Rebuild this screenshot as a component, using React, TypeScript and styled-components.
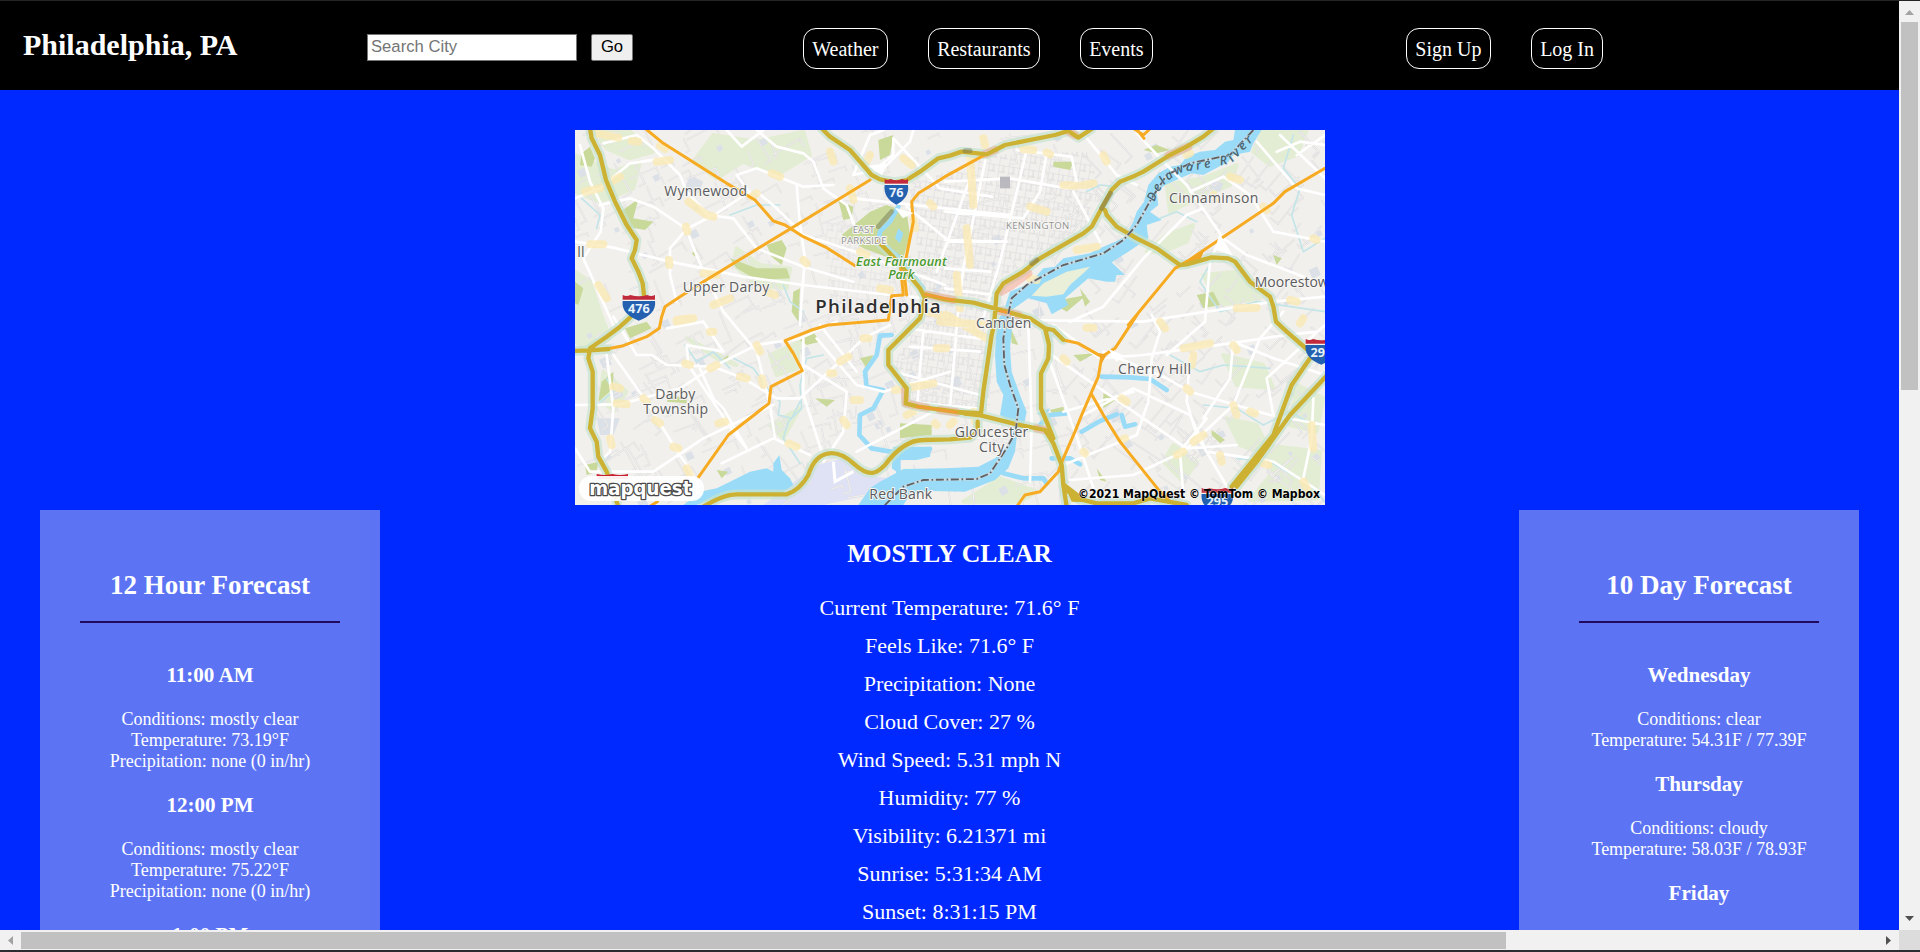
import React from "react";
import styled, { createGlobalStyle } from "styled-components";

const GlobalStyle = createGlobalStyle`
  * { box-sizing: border-box; }
  html, body { margin: 0; padding: 0; overflow: hidden; }
  body { font-family: "Liberation Serif", "Times New Roman", serif; color: #fff; background: #0029ff; }
`;

const Window = styled.div`
  display: grid;
  grid-template-columns: 1899px 21px;
  grid-template-rows: 929px 20px 2px;
  width: 1920px;
  height: 952px;
  border-top: 1px solid #242424;
  overflow: hidden;
`;

const Page = styled.div`
  overflow: hidden;
  background: #0029ff;
`;

const Header = styled.header`
  display: flex;
  align-items: flex-start;
  height: 89px;
  background: #000;
`;

const City = styled.h1`
  width: 344px;
  margin: 27px 0 0 23px;
  font-size: 30px;
  line-height: 34px;
`;

const SearchForm = styled.form`
  display: flex;
  gap: 14px;
  width: 436px;
  margin-top: 33px;
`;

const SearchInput = styled.input`
  width: 210px;
  height: 27px;
  padding: 0 3px 2px;
  border: 1px solid #767676;
  border-radius: 0;
  background: #fff;
  font: 16.67px "Liberation Sans", Arial, sans-serif;
  &::placeholder { color: #757575; }
`;

const GoButton = styled.button`
  width: 42px;
  height: 27px;
  padding: 0 0 2px;
  border: 1px solid #767676;
  border-radius: 2px;
  background: #efefef;
  color: #000;
  font: 16.67px "Liberation Sans", Arial, sans-serif;
`;

const Nav = styled.nav<{ $width: number }>`
  display: flex;
  gap: 40px;
  width: ${(p) => p.$width}px;
  margin-top: 27px;
`;

const NavLink = styled.a`
  height: 41px;
  padding: 9px 8.35px 7px;
  border: 1px solid #fff;
  border-radius: 13px;
  font-size: 20px;
  line-height: 23px;
  white-space: nowrap;
`;

const Main = styled.main`
  display: grid;
  grid-template-columns: 340px 750px 340px;
  justify-content: space-between;
  padding: 40px 40px 0;
`;

const Panel = styled.section<{ $left: number }>`
  height: 600px;
  margin-top: 380px;
  padding: 60px 40px 0 ${(p) => p.$left}px;
  background: #5c74f4;
  text-align: center;
`;

const PanelTitle = styled.h2`
  margin: 0 0 20px;
  font-size: 27px;
  line-height: 31px;
`;

const Rule = styled.hr`
  height: 2px;
  margin: 0 0 40px;
  border: 0;
  background: #210a5c;
`;

const Forecast = styled.article`
  margin-bottom: 21px;
  font-size: 18px;
  line-height: 21px;
`;

const ForecastTitle = styled.h3`
  margin: 0 0 22px;
  font-size: 21.06px;
  line-height: 24px;
`;

const Current = styled.section`
  text-align: center;
  font-size: 22px;
`;

const MapFrame = styled.svg`
  display: block;
  width: 750px;
  height: 375px;
`;

const CurrentTitle = styled.h3`
  margin: 34px 0 26px;
  font-size: 25.74px;
  line-height: 30px;
`;

const Reading = styled.p`
  margin: 0 0 13px;
  line-height: 25px;
`;

const VTrack = styled.div`
  display: flex;
  flex-direction: column;
  align-items: center;
  justify-content: space-between;
  padding: 9px 0 9px;
  background: #f1f1f1;
`;

const VThumb = styled.div`
  width: 17px;
  height: 368px;
  margin: 7px 0 auto;
  background: #c1c1c1;
`;

const HTrack = styled.div`
  display: flex;
  align-items: center;
  padding: 0 8px 0 8px;
  background: #f1f1f1;
`;

const HThumb = styled.div`
  width: 1485px;
  height: 17px;
  margin: 1px auto 0 8px;
  background: #c1c1c1;
`;

const Corner = styled.div`
  background: #dcdcdc;
`;

const BottomEdge = styled.div`
  grid-column: 1 / 3;
  background: #2b2c2f;
`;

const Arrow = styled.svg`
  display: block;
  flex: none;
`;

const hours = [
  { time: "11:00 AM", conditions: "mostly clear", temp: "73.19" },
  { time: "12:00 PM", conditions: "mostly clear", temp: "75.22" },
  { time: "1:00 PM" },
];

const days = [
  { day: "Wednesday", conditions: "clear", temp: "54.31F / 77.39F" },
  { day: "Thursday", conditions: "cloudy", temp: "58.03F / 78.93F" },
  { day: "Friday" },
];

const readings = [
  "Current Temperature: 71.6° F",
  "Feels Like: 71.6° F",
  "Precipitation: None",
  "Cloud Cover: 27 %",
  "Wind Speed: 5.31 mph N",
  "Humidity: 77 %",
  "Visibility: 6.21371 mi",
  "Sunrise: 5:31:34 AM",
  "Sunset: 8:31:15 PM",
];

/* ---- map data, in map units (three per pixel) ---- */

const meadows = [
  "M70 15L180 20 250 80 180 100 110 70Z", "M370 110L430 30 560 50 700 20 720 90 620 150 520 110 440 160Z",
  "M15 90L130 140 210 110 190 190 90 230 15 200Z", "M15 440L60 470 90 560 120 640 60 680 15 650Z",
  "M500 370L570 420 660 430 650 490 560 480 490 420Z", "M350 640L430 680 500 720 440 700Z",
  "M600 690L690 650 680 730 620 750Z", "M100 740L170 800 130 860 90 820Z",
  "M1790 180L1900 160 2000 120 1980 180 1860 230 1800 260Z", "M2080 15L2210 15 2180 90 2100 120 2050 80Z",
  "M1730 380L1790 330 1870 300 1850 350 1780 380Z", "M1900 450L2000 440 2070 520 1950 540Z",
  "M1970 880L2060 900 2110 1000 2010 960Z", "M2080 960L2250 980 2240 1120 2040 1125 2110 1040Z",
  "M1960 690L2080 720 2110 790 2000 780Z", "M1290 1060L1400 1100 1350 1130 1180 1130Z",
  "M1370 510L1440 455 1560 430 1480 490Z", "M2180 780L2260 820 2240 920 2160 900Z",
  "M1810 960L1880 1010 1840 1070 1780 1010Z", "M600 900L690 850 640 940Z",
];

const parks = [
  "M35 85L60 65 75 100 65 125 30 120Z", "M145 265L205 222 190 280 250 290 225 315 170 305Z",
  "M590 360L635 345 650 370 635 420 605 395Z", "M480 400L560 430 650 430 660 460 560 465 500 430Z",
  "M805 225L850 245 845 280 820 285Z", "M815 330L900 260 950 240 1010 260 1020 330 1000 400 960 400 880 370Z",
  "M925 45L970 30 960 90 930 105Z", "M15 470L40 490 25 540 15 535Z", "M670 500L690 490 685 590 665 560Z",
  "M165 610L230 590 245 610 180 640Z", "M95 770L130 740 130 790 85 830Z", "M870 700L910 690 890 730Z",
  "M990 895L1085 900 1085 930 990 940Z", "M45 1020L85 1010 80 1040 50 1050Z", "M300 810L350 820 350 835 290 830Z",
  "M1450 110L1510 110 1500 135 1450 125Z", "M1720 75L1760 60 1800 75 1760 85Z", "M1440 530L1550 510 1490 560Z",
  "M1320 605L1345 660 1325 655Z", "M1510 690L1575 685 1530 710Z", "M1600 805L1645 820 1600 850Z",
  "M1880 510L1930 500 1950 540 1900 550Z", "M1440 855L1480 845 1485 870 1450 870Z",
  "M1925 915L1965 945 1950 955 1925 930Z", "M1580 1030L1610 1070 1590 1065Z", "M2110 390L2135 400 2120 420Z",
  "M680 640L730 620 750 650 710 660Z", "M365 385L380 375 375 395Z", "M440 1035L475 1040 455 1060Z",
  "M735 820L795 825 770 845Z", "M475 690L455 705 475 700Z", "M1530 490L1560 530 1545 545Z",
];

const river =
  "M1995 15L1990 45 1965 50 1935 75 1890 80 1850 95 1830 120 1800 125 1765 145 1735 180 1722 230 1700 260 1690 290 1665 335 1640 348 1600 365 1560 385 1480 400 1455 425 1420 430 1380 475 1320 500 1300 560 1280 590 1275 690 1280 770 1300 810 1290 870 1335 905 1315 960 1275 1000 1225 1025 1125 1030 1000 1032 930 1070 900 1090 865 1140 1000 1140 1020 1110 1080 1098 1185 1100 1275 1065 1315 1030 1335 980 1340 940 1362 900 1370 860 1350 810 1325 740 1320 670 1330 570 1325 555 1375 520 1430 535 1445 568 1495 540 1485 520 1555 460 1610 470 1635 470 1640 450 1665 450 1625 412 1675 380 1735 340 1730 300 1775 285 1740 260 1765 240 1760 200 1785 180 1865 145 1900 150 1975 110 1990 90 2040 80 2050 55 2075 15Z";

const streams = [
  "M985 245L960 290 930 320 925 345 990 400 1060 490",
  "M965 630L930 632 920 690 885 740 890 785 940 795 910 850 870 870 868 930 905 970 960 980 1080 972",
  "M985 970L985 1045", "M1595 755L1680 757 1740 762 1790 795", "M1535 920L1590 888 1640 868",
  "M1655 870L1665 905 1695 898", "M1410 900L1440 870 1490 865", "M1445 1000L1500 1000 1530 1018",
  "M1300 1045L1360 1060 1420 1060 1430 1075",
];

const creeks = [
  "M690 1015L640 940 655 890 695 850 690 780 710 700 760 690", "M595 800L630 830 625 870 665 880 690 830",
  "M490 700L550 730 600 800", "M35 220L90 270 80 310", "M480 270L560 240 630 240", "M345 660L380 710 430 680 480 730",
  "M2170 30L2140 130 2190 190 2165 270 2200 380 2265 340", "M1930 400L1890 470 1950 560 2060 530 2265 560",
  "M1900 840L2000 850 2080 900 2160 860 2230 900", "M1800 690L1890 740 1960 720 2100 730", "M1770 280L1820 260 1880 290",
  "M1550 200L1590 180 1640 185", "M640 480L660 530 700 560", "M110 760L130 800 80 840", "M2000 1000L2100 1010 2220 1080 2265 1130",
];

const avenues = [
  "M15 350L130 368 300 410 520 455 700 480 960 510", "M30 60L60 170 100 250 92 320 40 400 130 600",
  "M100 55L200 30 250 70 330 150 350 200 415 270 490 280 560 370 700 425 850 470",
  "M90 240L180 220 250 245 350 312 440 265 540 200", "M350 312L300 370 300 450 320 530",
  "M280 100L180 115 90 190 15 220", "M470 15L515 65 580 15", "M540 205L500 150 560 130 700 185 790 180",
  "M560 15L620 65 700 85 730 110 760 190 830 240 860 320", "M680 180L690 300 705 400 695 520 690 600",
  "M345 305L400 440 460 560 560 680 600 840 615 940", "M560 200L620 250 700 330 870 385 1125 480",
  "M130 575L200 690 245 690 290 720 430 725 520 760 620 820 690 820", "M15 840L150 838 330 790 430 725 560 660 690 640 800 590",
  "M290 610L400 590 460 680 350 660 355 720 490 920 530 970", "M110 690L130 850 120 980 90 1010",
  "M15 970L60 1040 250 1040 400 940 610 840", "M130 690L230 830 310 960 370 1050",
  "M385 720L430 820 460 850 530 970", "M455 1015L610 940 720 990", "M700 640L700 810 755 980",
  "M700 720L830 800 820 920 760 1010", "M740 640L860 780 940 800 1140 740", "M690 820L820 700 880 640 960 600",
  "M750 600L860 740", "M940 15L900 30 850 150 940 130 1020 50 1030 15", "M920 130L970 90 970 40 1110 190 1265 215",
  "M850 220L1125 250 1320 270", "M1125 170L1320 160 1490 190 1520 170 1505 95 1340 75",
  "M1370 75L1290 410", "M1250 85L1180 430 1160 600", "M1190 80L1200 160 1100 440", "M1290 410L1240 580",
  "M1125 260L1360 280 1410 200 1430 85", "M1125 345L1310 350", "M1125 430L1260 440", "M1010 245L1140 350 1290 350",
  "M1125 490L1270 510", "M1020 515L1265 540", "M1015 610L1260 645", "M1020 665L1230 680",
  "M1060 615L1040 860", "M1160 610L1140 850", "M990 745L1230 810", "M1000 830L1220 850", "M860 980L1090 860",
  "M1510 200L1590 350", "M1530 15L1600 100 1640 150 1700 180", "M1700 25L1790 120 1850 180 1960 340 2030 390 2265 480",
  "M1860 200L1960 155 2040 210 2110 320 2265 350", "M2060 50L2180 190 2265 210", "M2180 90L2265 30",
  "M2120 80L2190 50 2265 60", "M1950 340L1920 410 1905 590 1790 690", "M1350 585L1720 590 1910 560 2110 530 2265 515",
  "M1500 590L1600 545 1720 400 1850 270 1900 250", "M1450 600L1590 700 1720 690 1980 655 2150 630 2240 620",
  "M1745 570L1770 620 1745 700 1735 830 1700 930 1480 1020", "M1430 680L1850 970 2000 960",
  "M1435 700L1520 935 1580 1120", "M1600 680L1790 760 1860 800 2100 870 2265 900", "M1860 690L1850 830 1880 930 1980 1100",
  "M1990 650L1980 760 1900 880", "M1540 870L1690 790 1860 870 1910 980 2110 1010 2265 1110",
  "M1500 1065L1690 1050 1840 980 1990 840 2070 640 2140 560", "M1375 600L1385 900 1380 1070", "M1480 860L1690 800",
  "M2110 870L2090 760 2265 600", "M2230 820L2225 940 2200 1060", "M1840 1110L1830 980 1910 880",
  "M1990 650L2110 700 2265 750", "M2130 30L2265 160", "M1125 950L1290 930",
];

const blobs = [
  "M75 25L145 38", "M185 48L205 50", "M260 110L300 105", "M45 200L90 190 150 155", "M60 358L100 358", "M270 62L285 72",
  "M355 230L410 270 430 275", "M348 305L352 320", "M605 145L630 155", "M780 80L790 110", "M890 110L900 90", "M1000 100L1025 120",
  "M840 190L850 225", "M1080 235L1090 245", "M1030 285L1035 310", "M545 215L560 205", "M297 405L298 420", "M85 480L110 520",
  "M400 445L440 450", "M430 540L480 520", "M320 590L370 580", "M700 405L710 415", "M590 500L615 510", "M870 380L890 390",
  "M930 490L960 495", "M320 585L360 580", "M420 620L430 620", "M560 660L570 680", "M420 730L440 720", "M345 715L360 720",
  "M510 755L530 760", "M575 760L580 780", "M130 785L150 790", "M140 835L170 838", "M220 820L230 830", "M255 885L270 895",
  "M445 895L465 890", "M310 965L325 970", "M120 940L125 960", "M350 1030L360 1050", "M810 710L835 695", "M780 745L790 745",
  "M880 640L895 640", "M850 825L870 825", "M820 885L830 900", "M655 955L680 965", "M975 795L1090 775", "M1100 670L1130 670",
  "M1110 590L1260 600", "M1130 570L1250 640", "M1070 560L1130 575", "M1160 450L1170 550", "M1200 90L1210 240", "M1190 310L1200 420",
  "M1240 40L1245 60", "M1360 72L1390 75", "M1430 82L1440 88", "M1480 180L1520 182", "M1380 245L1430 260", "M1600 90L1610 110",
  "M1380 460L1400 465", "M1520 375L1580 365", "M1540 180L1570 175", "M1850 90L1860 85", "M1980 155L2010 165", "M1930 210L1940 220",
  "M2080 245L2090 255", "M2230 340L2240 345", "M2000 550L2060 548", "M2160 525L2180 530", "M2190 595L2200 580", "M1550 608L1570 608",
  "M1770 590L1785 610", "M1840 670L1920 655", "M1870 690L1865 720", "M1990 660L2000 675", "M1480 700L1490 710", "M1655 820L1670 830",
  "M1850 790L1860 800", "M1990 840L2000 870", "M1870 950L1900 930", "M1820 990L1840 980", "M1950 990L1955 1010", "M2225 900L2230 970",
  "M2200 1070L2210 1090", "M1540 980L1545 985", "M1655 945L1665 940", "M1210 860L1215 890", "M1010 870L1030 860", "M1095 895L1100 900",
  "M2040 860L2055 865", "M1150 890L1140 900", "M2080 1015L2095 1020",
];

const orangeRoads = [
  "M225 10L280 55 470 175 555 225 610 288 645 300 700 335 770 368 855 422",
  "M110 672L160 662 230 635 268 610 275 575 285 545 330 515 400 470 660 312 900 165",
  "M1240 92L1125 155 1045 205 1025 230 1030 290 1008 400", "M992 430L1000 510 965 512 955 585 775 600 725 615 645 647 670 685 697 737 603 785 597 835 475 930 385 1057",
  "M1002 440L1010 510", "M262 1130L230 1150", "M1690 10L1720 30 1740 12", "M1700 12L1722 40",
  "M2265 130L2145 200 2110 235 1850 410 1815 430 1675 600", "M1702 568L1635 670 1595 695 1585 755 1563 805 1535 870 1515 920 1480 1000 1465 1040 1410 1100 1365 1110 1340 1145",
  "M1563 805L1600 870 1650 950 1770 1100 1800 1130", "M1480 645L1525 655 1595 695",
];

const highways = [
  "M60 10L65 40 90 90 108 165 135 230 170 300 200 345 195 375 185 400 205 440 218 475 222 510",
  "M180 578L150 605 110 635 60 670 55 700 68 740 68 850 60 910 80 950 85 995 110 1040 145 1145",
  "M10 678L60 676 115 672",
  "M755 10L780 35 840 75 905 150 930 163 975 172 1010 165 1050 140 1105 100 1140 92 1175 80 1250 88 1305 60 1455 30 1495 18 1525 38 1565 12",
  "M1928 12L1900 35 1850 65 1800 90 1720 140 1695 152 1650 170 1625 195 1595 250 1565 305 1540 325 1410 400 1360 440 1300 475 1280 505 1272 600 1265 630 1240 800 1233 865",
  "M1605 255L1610 270 1640 305 1700 340 1760 370 1830 420 1850 418 1925 397 1975 400 1995 410 2040 470 2100 515 2110 545 2118 590 2150 620 2210 672",
  "M1125 523L1210 533 1310 560 1380 580 1425 610 1450 615 1480 645",
  "M925 350L960 385 1000 430 1050 490 1065 520 1050 580 955 675 955 720 1010 790 1007 835 1045 845 1140 858 1235 872 1340 898 1425 915 1450 955 1475 1020 1480 1080 1490 1145",
  "M1065 508L1125 523", "M1425 610L1437 660 1435 700 1413 745 1413 850 1430 890 1450 940",
  "M400 1145Q460 1108 500 1108L650 1108Q690 1095 715 1050C740 970 800 970 850 1015S920 1045 945 1020Q1000 945 1060 945L1140 943 1200 938 1223 920 1223 890",
  "M2220 700L2165 780 2110 930 1985 1085", "M2270 752L2160 870 2060 1010 2000 1085",
  "M1490 1095L1520 1120 1580 1135 1690 1135 1740 1120 1850 1140",
];

const traffic = ["M1065 508L1150 525", "M1290 558L1345 570", "M1005 795L1007 835 1070 848", "M1110 855L1160 862", "M1795 92L1855 65", "M1295 500L1330 478 1375 445", "M1400 910L1430 917", "M1245 87L1275 75", "M1490 17L1515 30"];
const hotLanes = ["M1065 508L1150 525", "M1040 844L1160 862", "M1290 558L1320 564"];
const congestion = ["M965 260L925 305", "M1595 250L1622 205", "M1385 415L1400 405", "M1185 77L1200 77"];

const stateLine =
  "M2050 15L1980 90 1860 115 1790 150 1745 220 1700 300 1660 345 1600 385 1480 420 1370 480 1325 520 1308 600 1300 640 1303 720 1320 780 1345 850 1337 920 1310 970 1260 1045 1220 1062 1060 1065 1000 1085 940 1145";

/* Residential side streets: short segments with a fixed pseudo-random layout. */
const sideStreets = (() => {
  let seed = 17;
  const next = () => {
    seed = (seed * 16807) % 2147483647;
    return seed / 2147483647;
  };
  let d = "";
  for (let i = 0; i < 620; i++) {
    const x = 15 + next() * 2250;
    const y = 15 + next() * 1125;
    const base = x > 1480 ? 0.75 : x < 700 ? -0.5 : -0.25;
    const angle = base + (next() > 0.5 ? Math.PI / 2 : 0) + (next() - 0.5) * 0.35;
    const length = 30 + next() * 75;
    const dx = Math.cos(angle) * length;
    const dy = Math.sin(angle) * length;
    d += `M${x.toFixed(0)} ${y.toFixed(0)}l${dx.toFixed(0)} ${dy.toFixed(0)}l${(-dy * 0.3).toFixed(0)} ${(dx * 0.3).toFixed(0)}`;
  }
  return d;
})();

const blocks = (() => {
  let seed = 91;
  const next = () => {
    seed = (seed * 16807) % 2147483647;
    return seed / 2147483647;
  };
  let d = "";
  for (let i = 0; i < 90; i++) {
    const s = 10 + next() * 16;
    d += `M${(15 + next() * 2250).toFixed(0)} ${(15 + next() * 1125).toFixed(0)}l${s.toFixed(0)} ${(-s / 2).toFixed(0)} ${(s / 2).toFixed(0)} ${s.toFixed(0)} ${(-s).toFixed(0)} ${(s / 2).toFixed(0)}z`;
  }
  return d;
})();

type Label = { text: string; x: number; y: number; w: number; size?: number; weight?: number; color?: string; italic?: boolean };
const labels: Label[] = [
  { text: "Wynnewood", x: 283, y: 213, w: 248 },
  { text: "Upper Darby", x: 338, y: 500, w: 260 },
  { text: "ll", x: 22, y: 397, w: 22 },
  { text: "Darby", x: 256, y: 822, w: 120 },
  { text: "Township", x: 220, y: 868, w: 194 },
  { text: "Red Bank", x: 898, y: 1122, w: 188 },
  { text: "Camden", x: 1218, y: 608, w: 166 },
  { text: "Gloucester", x: 1154, y: 935, w: 221 },
  { text: "City", x: 1227, y: 982, w: 76 },
  { text: "Cherry Hill", x: 1644, y: 747, w: 219 },
  { text: "Cinnaminson", x: 1797, y: 234, w: 268 },
  { text: "Moorestown", x: 2054, y: 485, w: 248 },
  { text: "EAST", x: 848, y: 323, w: 66, size: 29, color: "#929292" },
  { text: "PARKSIDE", x: 813, y: 356, w: 137, size: 29, color: "#929292" },
  { text: "KENSINGTON", x: 1308, y: 311, w: 190, size: 29, color: "#929292" },
  { text: "East Fairmount", x: 858, y: 424, w: 272, size: 38, weight: 600, color: "#4a9a2f", italic: true },
  { text: "Park", x: 955, y: 461, w: 78, size: 38, weight: 600, color: "#4a9a2f", italic: true },
  { text: "Philadelphia", x: 736, y: 563, w: 376, size: 56, weight: 600, color: "#2e2e2e" },
];

const Lines = ({ d, stroke, width, opacity = 1 }: { d: string[]; stroke: string; width: number; opacity?: number }) => (
  <path d={d.join("")} fill="none" stroke={stroke} strokeWidth={width} opacity={opacity} strokeLinejoin="round" strokeLinecap="round" />
);

const Shield = ({ x, y, w, route }: { x: number; y: number; w: number; route: string }) => (
  <g transform={`translate(${x} ${y})`}>
    <path d={`M0 0Q${w * 0.12} 6 ${w * 0.24} 0Q${w * 0.5} 8 ${w * 0.76} 0Q${w * 0.88} 6 ${w} 0L${w} 15H0Z`} fill="#c02a3b" />
    <path d={`M0 17H${w}C${w + 4} 46 ${w * 0.84} 64 ${w / 2} 77C${w * 0.16} 64 -4 46 0 17Z`} fill="#2460b0" />
    <path d={`M-1 16H${w + 1}`} stroke="#f4f4f4" strokeWidth="4" />
    <text x={w / 2} y="54" fontSize="38" fontWeight="700" fill="#e8f2fa" textAnchor="middle">{route}</text>
  </g>
);

const CityMap = () => (
  <MapFrame viewBox="15 15 2250 1125" fontFamily='"Open Sans", "Noto Sans", sans-serif' aria-label="Map of Philadelphia">
    <defs>
      <pattern id="grid" width="30" height="42" patternUnits="userSpaceOnUse" patternTransform="rotate(9)">
        <path d="M0 0H30M0 21H22M0 0V42M15 0V21" stroke="#dadadb" strokeWidth="3" fill="none" />
      </pattern>
      <path id="delaware" d="M1745 228Q1756 185 1795 155T1860 128L1980 105 2055 25" />
    </defs>
    <rect x="15" y="15" width="2250" height="1125" fill="#f2f0ed" />
    <path d={meadows.join("")} fill="#e1edd0" stroke="#e1edd0" strokeWidth="12" strokeLinejoin="round" opacity=".85" />
    <path d={blocks} fill="#dce1e8" />
    <path d="M360 150L400 170 385 205 340 200Z M80 880L150 880 130 930 90 930Z M1925 165L1960 175 1950 200 1920 190Z" fill="#dce1e8" />
    <path d="M740 1020L820 1000 880 1050 960 1060 900 1110 760 1140 580 1140Z" fill="#dfe2f4" />
    <path d="M1025 180L1260 90 1550 80 1590 190 1540 320 1270 470 1260 870 1040 840 965 720 1060 580Z" fill="url(#grid)" />
    <path d="M760 290L850 300 1000 450 950 560 780 550Z" fill="url(#grid)" opacity=".7" />
    <path d={sideStreets} fill="none" stroke="#dadadb" strokeWidth="5" />
    <path d={sideStreets} fill="none" stroke="#f5f4f2" strokeWidth="2.5" />
    <path d={parks.join("")} fill="#c9d99a" />
    <Lines d={creeks} stroke="#c3e5e8" width={5} />
    <path d={river} fill="#9adcf7" />
    <path d="M1385 512L1420 475 1490 440 1560 425 1545 440 1500 480 1480 508 1430 515Z" fill="#e9efd9" />
    <path d="M400 1098L440 1090 480 1070 540 1040 590 1030 610 1040 610 1015 628 990 635 1035 660 1060 670 1080 620 1115 490 1100 380 1140 340 1140Z" fill="#9adcf7" />
    <path d="M970 965L1085 965 1080 995 1040 1005 990 1005 980 1040 965 1030Z M985 310L1000 325 990 355 975 340Z M1400 865L1440 850 1425 880Z" fill="#9adcf7" />
    <Lines d={streams} stroke="#9adcf7" width={14} />
    <Lines d={avenues} stroke="#fff" width={8} />
    <path d="M790 1010L795 1070 850 1040" fill="none" stroke="#fff" strokeWidth="9" />
    <Lines d={blobs} stroke="#fbe9b4" width={24} opacity={0.78} />
    <Lines d={highways} stroke="#c5e2ce" width={29} opacity={0.7} />
    <Lines d={traffic} stroke="#fa9c88" width={24} opacity={0.45} />
    <Lines d={orangeRoads} stroke="#f6ab22" width={9} />
    <path d="M1835 420L1905 372 1888 410Z M1588 684L1610 690 1595 715Z" fill="#f0a524" />
    <path d="M1480 1070L1505 1130 1560 1132Z M1165 855L1230 858 1235 875 1185 873Z" fill="#ccb133" />
    <Lines d={highways} stroke="#ccb133" width={13} />
    <Lines d={hotLanes} stroke="#f29a38" width={7} />
    <Lines d={congestion} stroke="#6f7051" width={15} opacity={0.45} />
    <path d="M1290 155H1320V190H1290Z" fill="#b9b9bf" />
    <path d="M905 125L945 120 935 145Z M985 255L1020 265 1000 275Z M1950 335L1980 385 1940 370Z M1625 680L1660 695 1640 705Z" fill="#fff" stroke="#fff" strokeWidth="8" />
    <path d={stateLine} fill="none" stroke="#d8d8d8" strokeWidth="8" opacity=".7" />
    <path d={stateLine} fill="none" stroke="#606164" strokeWidth="5.5" strokeDasharray="24 8 5 8" />
    <text fontSize="37" fontStyle="italic" fontWeight="600" fill="#4d626d" stroke="#9adcf7" strokeWidth="2" paintOrder="stroke" dy="10">
      <textPath href="#delaware" textLength="375">Delaware River</textPath>
    </text>
    {labels.map((l) => (
      <text
        key={l.text}
        x={l.x}
        y={l.y}
        fontSize={l.size ?? 42}
        fontWeight={l.weight ?? 500}
        fontStyle={l.italic ? "italic" : "normal"}
        fill={l.color ?? "#5a5b5e"}
        stroke="#f7f6f3"
        strokeWidth="6"
        strokeLinejoin="round"
        paintOrder="stroke"
        textLength={l.w}
      >
        {l.text}
      </text>
    ))}
    <Shield x={944} y={162} w={70} route="76" />
    <Shield x={158} y={510} w={97} route="476" />
    <Shield x={2207} y={642} w={94} route="295" />
    <Shield x={1895} y={1089} w={94} route="295" />
    <path d="M80 1047Q105 1053 127 1047Q150 1053 174 1047V1062H80Z" fill="#c82032" />
    <rect x="27" y="1053" width="375" height="75" rx="36" fill="#fff" opacity=".93" />
    <text
      x="58"
      y="1109"
      fontFamily='"DejaVu Sans", sans-serif'
      fontSize="56"
      fontWeight="700"
      fill="#fff"
      stroke="#4a4a4a"
      strokeWidth="8"
      strokeLinejoin="round"
      paintOrder="stroke"
      textLength="306"
      lengthAdjust="spacingAndGlyphs"
    >
      mapquest
    </text>
    <text x="1524" y="1120" fontFamily='"DejaVu Sans Condensed", "DejaVu Sans", sans-serif' fontSize="35" fontWeight="700" fill="#000" stroke="#fff" strokeWidth="3" strokeOpacity=".5" paintOrder="stroke" textLength="726" lengthAdjust="spacingAndGlyphs">
      ©2021 MapQuest © TomTom © Mapbox
    </text>
  </MapFrame>
);

export default function App() {
  return (
    <>
      <GlobalStyle />
      <Window>
        <Page>
          <Header>
            <City>Philadelphia, PA</City>
            <SearchForm>
              <SearchInput placeholder="Search City" />
              <GoButton type="button">Go</GoButton>
            </SearchForm>
            <Nav $width={603}>
              <NavLink>Weather</NavLink>
              <NavLink>Restaurants</NavLink>
              <NavLink>Events</NavLink>
            </Nav>
            <Nav $width={200}>
              <NavLink>Sign Up</NavLink>
              <NavLink>Log In</NavLink>
            </Nav>
          </Header>
          <Main>
            <Panel $left={40}>
              <PanelTitle>12 Hour Forecast</PanelTitle>
              <Rule />
              {hours.map((h) => (
                <Forecast key={h.time}>
                  <ForecastTitle>{h.time}</ForecastTitle>
                  {h.conditions && (
                    <>
                      <div>Conditions: {h.conditions}</div>
                      <div>Temperature: {h.temp}°F</div>
                      <div>Precipitation: none (0 in/hr)</div>
                    </>
                  )}
                </Forecast>
              ))}
            </Panel>
            <Current>
              <CityMap />
              <CurrentTitle>MOSTLY CLEAR</CurrentTitle>
              {readings.map((r) => (
                <Reading key={r}>{r}</Reading>
              ))}
            </Current>
            <Panel $left={60}>
              <PanelTitle>10 Day Forecast</PanelTitle>
              <Rule />
              {days.map((d) => (
                <Forecast key={d.day}>
                  <ForecastTitle>{d.day}</ForecastTitle>
                  {d.conditions && (
                    <>
                      <div>Conditions: {d.conditions}</div>
                      <div>Temperature: {d.temp}</div>
                    </>
                  )}
                </Forecast>
              ))}
            </Panel>
          </Main>
        </Page>
        <VTrack>
          <Arrow width="9" height="5"><path d="M0 5L4.5 0 9 5Z" fill="#a3a3a3" /></Arrow>
          <VThumb />
          <Arrow width="9" height="5"><path d="M0 0L4.5 5 9 0Z" fill="#505050" /></Arrow>
        </VTrack>
        <HTrack>
          <Arrow width="5" height="9"><path d="M5 0L0 4.5 5 9Z" fill="#a3a3a3" /></Arrow>
          <HThumb />
          <Arrow width="5" height="9"><path d="M0 0L5 4.5 0 9Z" fill="#505050" /></Arrow>
        </HTrack>
        <Corner />
        <BottomEdge />
      </Window>
    </>
  );
}
